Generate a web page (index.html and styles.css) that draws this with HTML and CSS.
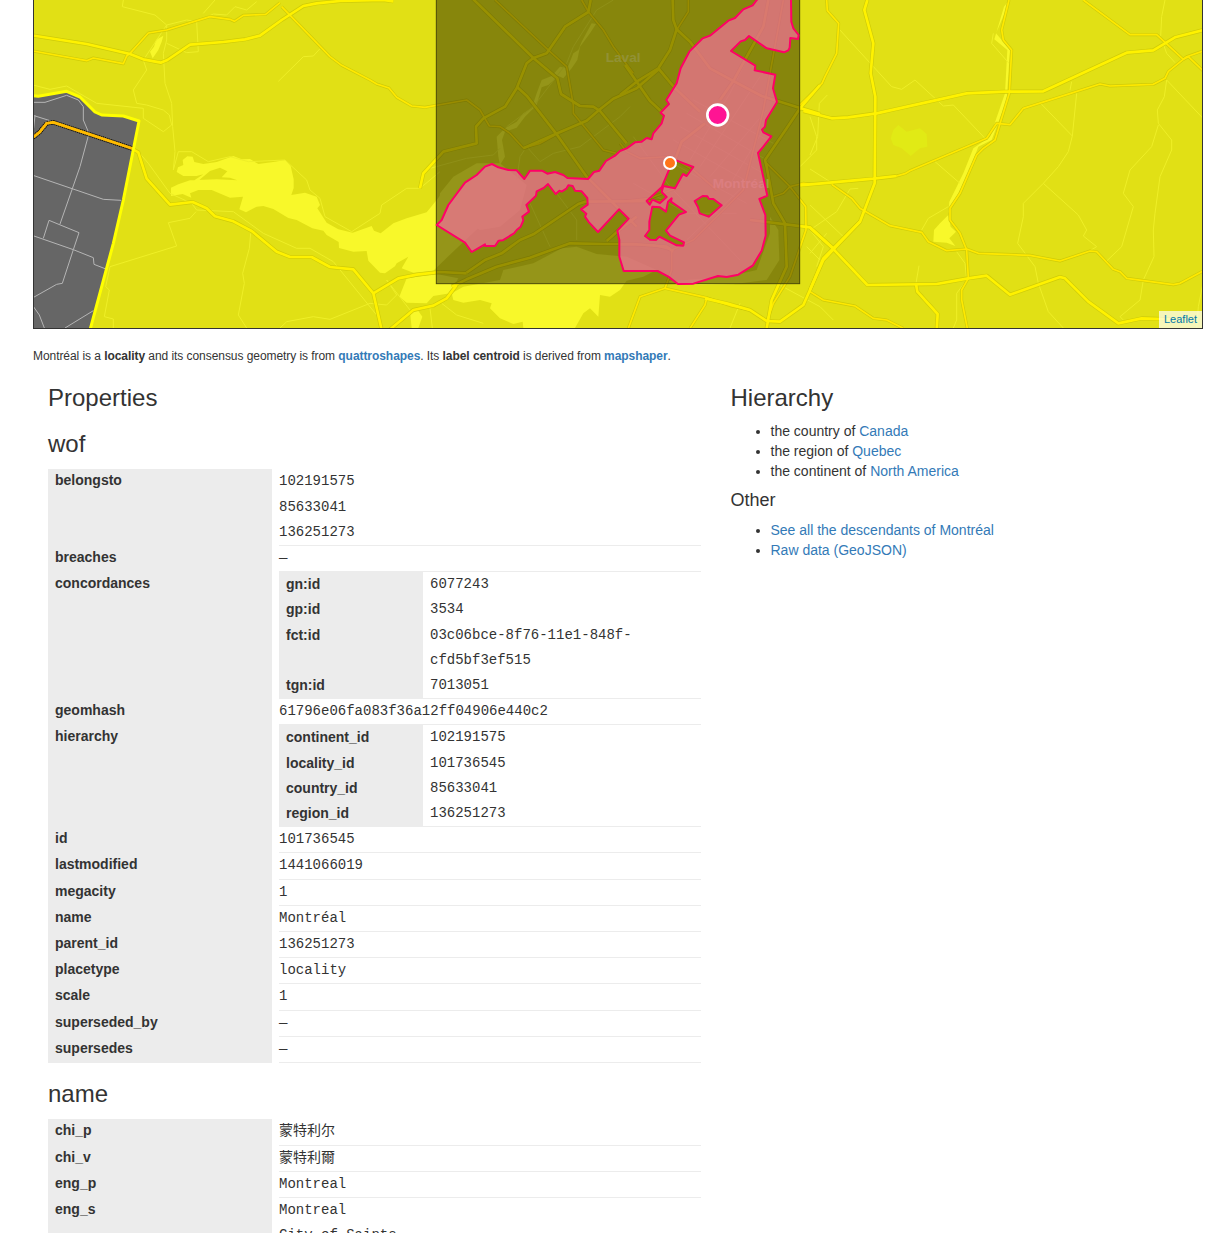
FILE: index.html
```html
<!DOCTYPE html>
<html lang="en">
<head>
<meta charset="utf-8">
<title>Montréal</title>
<link rel="stylesheet" href="styles.css">
</head>
<body>
<div class="map">
<svg class="map-canvas" viewBox="99 0 3510 984" preserveAspectRatio="none">
  <defs>
    <g id="major">
      <g transform="translate(90)">
        <path d="M0 105L170 132L300 162L340 178L392 188L412 180L480 134L580 126L645 118L690 107L755 60L820 18L860 10L930 3L1060 0L1090 4"/>
        <path d="M305 446L325 457L350 536L420 614L488 606L530 625L555 649L610 664L665 693L740 755L780 771L845 771L900 801L970 808L1030 880L1055 990"/>
      </g>
      <g transform="translate(690)">
        <path d="M430 880L505 835L560 824L630 816L710 820"/>
        <path d="M570 565L580 520L640 455L740 430L738 380L760 355L825 320L860 265L890 190L910 174L950 160L1005 80L1075 36L1082 0"/>
        <path d="M478 990L550 930L610 917L650 895L680 855"/>
      </g>
      <g transform="translate(1290)">
        <path d="M128 -4L310 174L382 235L393 282L450 318L490 320L510 333L590 430"/>
        <path d="M262 262L290 287L380 403L470 530L540 600L620 680"/>
        <path d="M280 445L375 403L470 362L510 328L550 296L620 265L690 205"/>
        <path d="M65 860L110 838L200 800L300 773L420 730L525 732L610 732L710 740L730 755"/>
        <path d="M110 818L165 780L215 760L270 720L310 703L445 612L465 605L700 603"/>
        <path d="M530 723L570 688L620 650"/>
      </g>
      <g transform="translate(1860)">
        <path d="M158 0L160 60L170 88L210 125L270 205L340 243L425 288L540 324L600 342"/>
        <path d="M170 88L150 150L115 205L50 245L0 285"/>
        <path d="M15 195L50 245L90 303L130 340"/>
        <path d="M115 205L165 265L240 335"/>
        <path d="M255 370L185 425L165 480"/>
        <path d="M300 300L340 243L430 80L445 0"/>
        <path d="M600 255L540 325L500 385L435 480L440 500L460 610L495 670L500 800L455 900L440 985"/>
        <path d="M390 660L570 682L640 745"/>
        <path d="M255 895L320 910L390 930L440 963L480 965L550 915L610 780L720 665"/>
      </g>
      <g transform="translate(2430)">
        <path d="M172 0L163 30L190 130L182 220L196 290L194 550L150 665L40 775L0 870"/>
        <path d="M-20 333L65 355L115 352L200 340L470 280L585 275L700 274L950 158L1030 151L1095 112L1180 90"/>
        <path d="M0 683L68 745L172 855L380 852L475 835L530 827L600 884L750 831L765 835L835 905L925 970L995 955L1080 958"/>
        <path d="M318 852L322 875L383 942L380 990"/>
        <path d="M-30 556L190 536L260 528"/>
      </g>
    </g>
    <g id="minor">
      <path d="M99 153L260 182L280 174L370 191L380 168L390 160L445 99L500 90L630 50L690 58L703 64L730 46L797 43L840 8"/>
      <path d="M845 20L990 170L1025 196L1110 240L1130 252L1167 264L1190 292L1235 318L1275 322L1400 300L1440 330L1468 378L1500 380L1530 400L1570 444L1620 430L1665 405"/>
      <path d="M1485 0L1650 155L1700 200L1720 315L1720 340L1810 450L1850 460"/>
      <path d="M1745 0L1765 35L1810 90L1840 140L1900 220"/>
      <path d="M2065 0L2065 35L2030 90"/>
      <path d="M1885 985L1920 890L1995 865L2120 893L2195 918L2250 930"/>
      <path d="M2120 895L2115 915L2070 985"/>
      <path d="M1860 430L1880 455L1920 475L2010 470L2080 510L2150 570"/>
      <path d="M1860 605L1950 595L2040 560"/>
      <path d="M1860 735L1960 735L2015 750L2080 720L2230 570L2290 330L2350 0"/>
      <path d="M2015 750L2015 810L1995 865"/>
      <path d="M2300 490L2370 560L2410 550L2430 552M2320 590L2350 580L2370 560"/>
      <path d="M2370 560L2417 620L2418 690L2370 830L2320 910L2300 965"/>
      <path d="M2480 0L2482 32L2516 70L2510 160L2475 230L2466 250L2400 315"/>
      <path d="M2690 528L2715 521L2730 512L2960 415L2990 370L3030 374L3070 325L3200 284L3300 252L3330 258L3460 253L3495 235L3505 214L3560 170L3609 153"/>
      <path d="M2495 553L2555 595L2580 625L2670 677L2765 697L2785 725L2840 752L2900 747L2935 760L3090 766L3180 783L3270 753L3290 755L3340 808L3360 815L3380 835L3520 854L3540 850L3609 813"/>
      <path d="M3027 0L3005 90L3010 120L3035 150L3028 280L2985 420L2950 445L2930 465L2880 580L2850 625L2850 660L2880 700L2900 750L2905 835L2885 870L2885 900L2902 985"/>
      <path d="M3250 0L3390 104L3470 104L3550 178L3565 170L3609 212"/>
      <path d="M2430 875L2470 900L2565 918L2620 955L2660 960L2710 985"/>
    </g>
  </defs>

  <rect class="land" x="99" width="3510" height="984"/>

  <g class="water">
    <g transform="translate(450 420)">
      <path d="M63 143L85 133L120 121L200 118L262 121L240 113L215 112L232 94L210 83L180 93L145 122L133 121L160 103L140 108L100 108L80 96L84 82L100 75L98 60L112 49L128 50L133 66L160 72L200 66L250 48L275 58L300 57L325 72L375 65L405 60L422 78L431 118L431 144L424 165L465 158L500 170L510 195L502 205L530 248L565 268L608 278L665 258L672 272L692 280L730 250L770 235L830 217L860 180L905 120L1000 250L925 320L850 392L790 398L755 385L775 350L740 370L735 379L705 400L690 398L655 362L650 333L610 335L567 324L566 306L530 285L520 272L487 265L440 240L415 234L370 207L340 198L320 200L288 217L268 208L279 170L240 173L185 150L145 150L120 160L124 173L98 162L63 168Z"/>
      <path d="M770 415L860 402L925 415L900 460L850 468L830 490L770 488L748 470Z"/>
    </g>
    <g transform="translate(1140 540)">
      <path d="M215 340L250 320L360 300L370 270L460 250L545 205L590 200L650 222L740 230L830 270L790 290L740 302L720 330L690 350L660 345L655 410L630 385L610 400L585 444L430 444L428 425L400 432L360 415L330 385L335 370L300 360L250 368L220 360Z"/>
      <path d="M90 395L115 393L127 410L115 444H95Z"/>
    </g>
    <path d="M1495 470L1490 410L1515 385L1550 365L1570 340L1595 325L1610 280L1625 240L1655 228L1680 200L1702 205L1720 160L1735 150L1745 125L1775 70L1788 72L1770 100L1740 140L1732 180L1715 205L1690 235L1675 228L1645 255L1625 262L1610 315L1575 350L1550 383L1515 395L1506 420L1515 470L1500 495Z"/>
    <path d="M1310 665L1320 580L1360 530L1430 490L1500 490L1580 555L1560 630L1500 680L1440 690L1390 660L1350 700L1309 758Z"/>
    <path d="M1992 845L2180 830L2270 810L2310 700L2310 650L2335 690L2338 780L2300 840L2200 853L2100 855Z"/>
    <path d="M2800 725L2802 690L2820 670L2845 645L2852 680L2868 695L2848 715L2866 738L2840 728Z"/>
    <path d="M3027 0L3018 30L2988 100L3030 150L3020 300L2975 420L2935 440L2900 530L2845 640L2848 605L2890 520L2920 445L2970 410L3015 280L3022 150L2983 118L3012 20Z"/>
    <path d="M490 107L468 120L462 140L450 155L458 175L475 150L485 125Z"/>
  </g>
  <path class="park" d="M2672 415L2680 390L2695 375L2720 395L2760 385L2780 402L2782 440L2760 445L2732 468L2705 445L2680 435Z"/>

  <g class="tracks">
    <path d="M370 0L367 20L465 45L500 75L500 120L490 160L495 250L515 310L518 380L525 455L520 510L535 455L575 455L625 485L690 470L745 485L855 480L920 540L930 570L960 595L975 650L1055 695L1140 640L1145 615L1220 565L1260 565L1320 515"/>
    <path d="M645 0L610 40M590 65L595 155L560 158L500 130"/>
    <path d="M99 255L150 268L200 258L290 310L430 325L430 355L490 395L515 375L508 345L490 330L440 315L410 310L400 270L440 210L430 180L450 150L500 75L560 60L590 65L640 42L680 45L705 20L740 30L770 5"/>
    <path d="M415 455L445 490L510 580L575 610L590 630L700 635L790 700L890 745L930 745L1000 785L1130 945"/>
    <path d="M588 635L570 655L505 668L530 738L330 800L317 860L328 870L313 950L340 957L340 984"/>
    <path d="M752 700L748 745L728 820L733 850L715 945L740 984M835 244L910 170L940 168L960 146M840 984L860 965L940 950L990 958L1110 910L1160 915L1190 885L1160 840L1230 930"/>
    <path d="M1290 505L1400 475L1480 465L1500 445M1550 540L1560 470L1580 440M1580 440L1620 485L1660 460L1740 440L1860 350L1890 320M1590 610L1650 740M1670 580L1730 660L1730 720M1520 380L1600 320L1700 190L1720 140L1790 30L1840 0"/>
    <path d="M2518 88L2675 260L2705 268L2745 240L2830 318L2860 315L2955 415M2482 285L2458 310L2453 410L2430 465M2430 507L2490 545M2805 485L2880 550M2575 565L2550 567L2510 635L2430 690M2430 615L2530 710M2757 797L2748 850M2870 755L2895 790L2900 840L2870 880L2870 960L2860 984M2980 100L2975 130L3027 190M2845 620L2785 655L2765 690"/>
    <path d="M3122 310L3217 408L3230 280M3217 408L3205 455L3175 500L3130 550L3070 610L3070 650L3053 730L3105 800L3115 850L3145 935L3190 984M3130 550L3235 645L3260 690L3250 708L3290 740L3265 755M3210 270L3215 245M3495 0L3485 50L3482 110L3500 160L3525 188M3500 240L3609 355M3500 240L3493 290L3472 330L3475 370L3515 420L3515 450L3480 530L3465 640L3460 690L3462 770L3430 840L3420 900L3360 950L3370 960M3475 375L3455 440L3390 510L3370 580L3400 620L3365 740L3320 783M3609 850L3595 920L3590 984"/>
    <path d="M2430 350L2450 410L2450 450L2400 500M2430 690L2470 740L2450 800M2190 984L2220 910M2330 850L2460 920L2500 960M1325 910L1370 945L1450 970M1290 925L1297 984M2480 700L2430 760M2420 740L2470 790"/>
    <path d="M1900 410L2010 560L2220 780M1900 550L2060 640L2210 640M2080 300L2320 430M2060 340L2300 480M2040 380L2290 520M2020 420L2270 560M1980 470L2240 610M2070 480L2190 280L2280 100M2100 500L2280 230M2130 530L2300 330M2180 570L2290 390M2060 720L2250 540"/>
  </g>

  <use href="#minor" class="casing casing-minor"/>
  <use href="#major" class="casing casing-major"/>
  <use href="#minor" class="road road-minor"/>
  <use href="#major" class="road road-major"/>

  <path class="outside" d="M99 287L115 289L200 274L240 291L285 336L305 345L370 348L417 363L370 600L340 730L270 984L99 984Z"/>
  <g class="outside-roads">
    <path d="M99 307L135 307L200 286L235 300L250 320L250 360L267 400L240 500L180 672M99 346L150 362M99 526L310 598L363 601M99 707L220 749L280 773L282 793L315 806M130 715L147 661L237 698L220 749L187 850L170 853L99 893M99 918L118 945L133 984M195 984L280 932M105 346L101 385"/>
  </g>
  <path class="highway-case" d="M99 412L118 397L140 370L160 367L398 446"/>
  <path class="highway" d="M99 412L118 397L140 370L160 367L398 446"/>
  <path class="boundary" d="M99 287L115 289L200 274L240 291L285 336L305 345L370 348L417 363L370 600L340 730L270 990"/>

  <text class="place" x="1817" y="187">Laval</text>
  <rect class="bbox" x="1309" y="-10" width="1090" height="861"/>
  <text class="place place-dim" x="2138" y="563">Montréal</text>
  <path class="shape" fill-rule="evenodd" d="M1310 675L1325 660L1345 615L1395 548L1430 525L1455 500L1476 492L1495 502L1525 510L1550 511L1573 537L1590 512L1626 512L1642 521L1665 516L1690 525L1702 534L1764 537L1782 516L1798 512L1818 483L1845 467L1860 453L1880 445L1905 427L1925 425L1940 414L1955 418L1960 400L1985 370L1992 347L1982 338L2007 312L1999 300L2030 250L2042 205L2068 155L2108 115L2130 107L2185 62L2205 54L2230 28L2258 16L2275 -6L2373 -6L2374 65L2380 85L2396 105L2394 117L2371 114L2369 143L2365 151L2352 157L2300 145L2247 108L2235 120L2222 124L2193 153L2266 197L2264 211L2326 224L2319 265L2331 306L2298 360L2295 380L2286 389L2290 397L2314 409L2290 440L2274 459L2302 587L2278 597L2296 645L2297 707L2285 752L2258 797L2215 824L2180 831L2154 828L2080 851L2034 852L2005 830L1973 813L1871 813L1858 770L1858 720L1852 692L1886 656L1857 628L1794 696L1767 667L1755 650L1759 641L1743 628L1763 614L1762 594L1745 574L1725 572L1718 558L1705 556L1699 566L1685 575L1678 572L1667 582L1644 552L1631 564L1610 574L1608 587L1579 615L1587 635L1567 650L1570 661L1562 680L1550 690L1542 700L1508 721L1496 722L1485 738L1455 738L1455 733L1415 756L1395 728ZM2030 482L2080 501L2060 528L2049 522L2025 565L1990 558L1985 576L2000 591L1980 609L1957 599L1949 614L1940 603L1985 562L2015 490ZM1957 620L1980 622L1998 635L2004 605L2015 595L2013 605L2058 636L2037 644L1998 692L2010 707L2052 727L2050 737L2030 736L1978 710L1968 720L1950 719L1935 708L1948 690L1948 665ZM2084 603L2108 588L2122 589L2127 597L2140 597L2165 616L2126 650L2099 640L2094 622Z"/>
  <circle class="pin pin-label" cx="2153" cy="345" r="31"/>
  <circle class="pin pin-math" cx="2010" cy="489" r="18"/>
</svg>
<a class="attribution" href="#">Leaflet</a>
</div>

<p class="summary">Montréal is a <b>locality</b> and its consensus geometry is from <a href="#"><b>quattroshapes</b></a>. Its <b>label centroid</b> is derived from <a href="#"><b>mapshaper</b></a>.</p>

<div class="columns">
  <main class="properties">
    <h2>Properties</h2>
    <h2>wof</h2>
    <dl class="table">
      <div class="row"><dt>belongsto</dt><dd>102191575<br>85633041<br>136251273</dd></div>
      <div class="row"><dt>breaches</dt><dd>—</dd></div>
      <div class="row"><dt>concordances</dt><dd>
        <dl class="nested">
          <div class="row"><dt>gn:id</dt><dd>6077243</dd></div>
          <div class="row"><dt>gp:id</dt><dd>3534</dd></div>
          <div class="row"><dt>fct:id</dt><dd>03c06bce-8f76-11e1-848f-<br>cfd5bf3ef515</dd></div>
          <div class="row"><dt>tgn:id</dt><dd>7013051</dd></div>
        </dl></dd></div>
      <div class="row"><dt>geomhash</dt><dd>61796e06fa083f36a12ff04906e440c2</dd></div>
      <div class="row"><dt>hierarchy</dt><dd>
        <dl class="nested">
          <div class="row"><dt>continent_id</dt><dd>102191575</dd></div>
          <div class="row"><dt>locality_id</dt><dd>101736545</dd></div>
          <div class="row"><dt>country_id</dt><dd>85633041</dd></div>
          <div class="row"><dt>region_id</dt><dd>136251273</dd></div>
        </dl></dd></div>
      <div class="row"><dt>id</dt><dd>101736545</dd></div>
      <div class="row"><dt>lastmodified</dt><dd>1441066019</dd></div>
      <div class="row"><dt>megacity</dt><dd>1</dd></div>
      <div class="row"><dt>name</dt><dd>Montréal</dd></div>
      <div class="row"><dt>parent_id</dt><dd>136251273</dd></div>
      <div class="row"><dt>placetype</dt><dd>locality</dd></div>
      <div class="row"><dt>scale</dt><dd>1</dd></div>
      <div class="row"><dt>superseded_by</dt><dd>—</dd></div>
      <div class="row"><dt>supersedes</dt><dd>—</dd></div>
    </dl>
    <h2>name</h2>
    <dl class="table">
      <div class="row"><dt>chi_p</dt><dd lang="zh">蒙特利尔</dd></div>
      <div class="row"><dt>chi_v</dt><dd lang="zh">蒙特利爾</dd></div>
      <div class="row"><dt>eng_p</dt><dd>Montreal</dd></div>
      <div class="row"><dt>eng_s</dt><dd>Montreal<br>City of Saints</dd></div>
    </dl>
  </main>
  <aside class="related">
    <h2>Hierarchy</h2>
    <ul>
      <li>the country of <a href="#">Canada</a></li>
      <li>the region of <a href="#">Quebec</a></li>
      <li>the continent of <a href="#">North America</a></li>
    </ul>
    <h4>Other</h4>
    <ul>
      <li><a href="#">See all the descendants of Montréal</a></li>
      <li><a href="#">Raw data (GeoJSON)</a></li>
    </ul>
  </aside>
</div>
</body>
</html>
```
FILE: styles.css
```css
* { box-sizing: border-box; }
html { height: 100%; overflow: hidden; }
body {
  margin: 0;
  padding: 0 27px 0 33px;
  height: 1233px;
  overflow: hidden;
  background: #fff;
  color: #333;
  font: 14px/19.6px "Liberation Sans", Arial, sans-serif;
}
a { color: #337ab7; text-decoration: none; }

.map {
  position: relative;
  height: 329px;
  border: solid #333;
  border-width: 0 1px 1px;
}
.map-canvas { display: block; width: 1170px; height: 328px; margin: 0 -1px; position: relative; z-index: -1; }
.attribution {
  position: absolute;
  right: 0;
  bottom: 0;
  padding: 0 5px;
  background: rgba(255, 255, 255, .7);
  color: #0078a8;
  font-size: 11px;
  line-height: 17px;
}
.land { fill: #e1e015; }
.water { fill: #f8f82a; }
.park { fill: #e1ea15; }
.tracks { fill: none; stroke: #efef27; stroke-width: 3; }
.casing, .road { fill: none; stroke-linejoin: round; }
.casing { stroke: #cfcb08; }
.casing-minor { stroke-width: 9; }
.casing-major { stroke-width: 12; }
.road-minor { stroke: #ffe900; stroke-width: 5; }
.road-major { stroke: #fff200; stroke-width: 8; }
.outside { fill: #666; }
.outside-roads { fill: none; stroke: #b5b5b5; stroke-width: 3; }
.highway-case { fill: none; stroke: #000; stroke-width: 14; stroke-dasharray: 4 2; }
.highway { fill: none; stroke: #fb0; stroke-width: 9; }
.boundary { fill: none; stroke: #ff0; stroke-width: 9; stroke-linejoin: round; }
.place { fill: #f2f259; font: bold 41px "Liberation Sans", Arial, sans-serif; }
.place-dim { fill: #a1a13e; }
.bbox { fill: rgba(0, 0, 0, .4); stroke: #4b4a08; stroke-width: 3; }
.shape { fill: rgba(244, 111, 157, .7); stroke: #f06; stroke-width: 6; stroke-linejoin: round; }
.pin { stroke: #fff; }
.pin-label { fill: #ff1493; stroke-width: 8; }
.pin-math { fill: #ff7518; stroke-width: 6; }

.summary { margin: 19px 0 20px; font-size: 12px; line-height: 17px; letter-spacing: -.06px; }
.columns { display: flex; gap: 29.5px; padding-left: 15px; }
.properties { width: 653px; }
h2 { margin: 18px 0 12px; font-size: 24px; line-height: 26.4px; font-weight: 400; }
.properties > h2:first-child { margin: 0 0 19.6px; }
.properties > h2:first-child + h2 { margin-top: 0; }
dl, dd { margin: 0; }
.row { display: flex; gap: 7px; line-height: 25.2px; }
dt {
  width: 224px;
  flex: none;
  padding-left: 7px;
  background: #ececec;
  font-family: "Liberation Sans", Arial, sans-serif;
  font-weight: 700;
  line-height: 23px;
}
dd { flex: 1; font-family: "Liberation Mono", "Noto Sans CJK SC", monospace; }
.table > .row > dd { border-bottom: 1px solid #ececec; }
.table > .row { min-height: 26.2px; }
.nested dt { width: 144px; line-height: 24px; }
dd[lang="zh"] { font-family: "Noto Sans CJK SC", sans-serif; line-height: 20px; }

.related h2 { margin: 0 0 11px; }
h4 { margin: 9.6px 0 10.5px; font-size: 18px; line-height: 19.8px; font-weight: 400; }
ul { margin: 0; padding-left: 40px; }
```
